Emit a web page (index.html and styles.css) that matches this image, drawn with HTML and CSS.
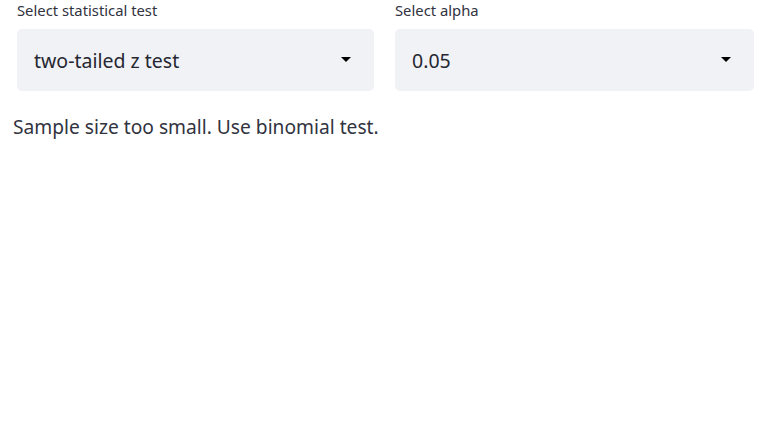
FILE: index.html
```html
<!DOCTYPE html>
<html>
<head>
<meta charset="utf-8">
<link rel="stylesheet" href="styles.css">
</head>
<body>
<div class="app">
  <div class="row">
    <div class="field">
      <div class="label">Select statistical test</div>
      <div class="select">
        <span class="value">two-tailed z test</span>
        <svg class="caret" width="10" height="5" viewBox="0 0 10 5"><path d="M0 0H10L5 5Z" fill="#000"/></svg>
      </div>
    </div>
    <div class="field">
      <div class="label">Select alpha</div>
      <div class="select">
        <span class="value">0.05</span>
        <svg class="caret" width="10" height="5" viewBox="0 0 10 5"><path d="M0 0H10L5 5Z" fill="#000"/></svg>
      </div>
    </div>
  </div>
  <p class="msg">Sample size too small. Use binomial test.</p>
</div>
</body>
</html>
```
FILE: styles.css
```css
html, body {
  margin: 0;
  padding: 0;
  background: #ffffff;
}
body {
  font-family: "Noto Sans", "Open Sans", sans-serif;
  color: #31333f;
}
.app {
  padding: 0 14px 0 13px;
}
.row {
  display: grid;
  grid-template-columns: 357px 359px;
  gap: 21px;
  padding-left: 4px;
}
.field {
  display: flex;
  flex-direction: column;
}
.label {
  font-size: 14.8px;
  line-height: 20px;
  height: 20px;
  margin-bottom: 9px;
}
.select {
  background: #f0f2f6;
  border-radius: 5px;
  height: 62px;
  display: flex;
  align-items: center;
  justify-content: space-between;
  padding: 0 23px 0 17px;
}
.value {
  font-size: 19.5px;
  color: #262730;
}
.caret {
  display: block;
  margin-top: -2px;
}
.msg {
  margin: 20px 0 0 0;
  font-size: 19.2px;
  line-height: 32px;
}
```
